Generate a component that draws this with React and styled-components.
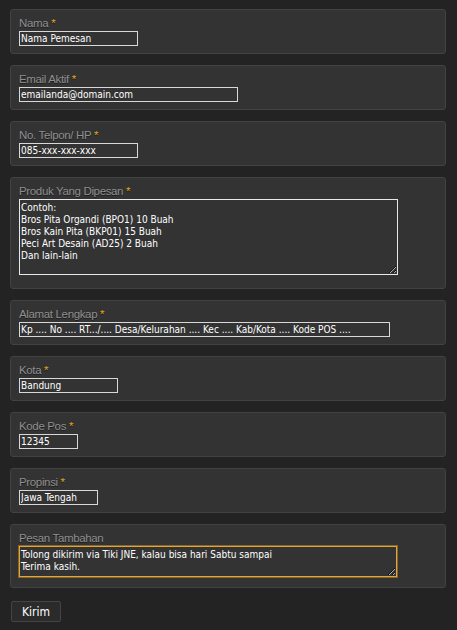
import styled, { createGlobalStyle } from "styled-components"

const GlobalStyle = createGlobalStyle`
  html, body {
    margin: 0;
    padding: 0;
    background: #232323;
  }
  body {
    font-family: "Liberation Sans", Arial, sans-serif;
  }
`

const fields = [
  { label: "Nama", required: true, value: "Nama Pemesan", width: 119 },
  { label: "Email Aktif", required: true, value: "emailanda@domain.com", width: 219 },
  { label: "No. Telpon/ HP", required: true, value: "085-xxx-xxx-xxx", width: 119 },
  {
    label: "Produk Yang Dipesan",
    required: true,
    multiline: true,
    value: "Contoh:\nBros Pita Organdi (BPO1) 10 Buah\nBros Kain Pita (BKP01) 15 Buah\nPeci Art Desain (AD25) 2 Buah\nDan lain-lain",
    width: 379,
    height: 76,
    after: 6,
  },
  {
    label: "Alamat Lengkap",
    required: true,
    value: "Kp .... No .... RT.../.... Desa/Kelurahan .... Kec .... Kab/Kota .... Kode POS ....",
    width: 371,
  },
  { label: "Kota", required: true, value: "Bandung", width: 99 },
  { label: "Kode Pos", required: true, value: "12345", width: 59 },
  { label: "Propinsi", required: true, value: "Jawa Tengah", width: 79 },
  {
    label: "Pesan Tambahan",
    multiline: true,
    active: true,
    value: "Tolong dikirim via Tiki JNE, kalau bisa hari Sabtu sampai\nTerima kasih.",
    width: 378,
    height: 31,
    after: 3,
  },
]

const App = () => {
  return (
    <>
      <GlobalStyle />
      <Form onSubmit={event => event.preventDefault()}>
        {fields.map(field => (
          <Fieldset key={field.label}>
            <Label>
              {field.label}
              {field.required ? <Star> *</Star> : false}
            </Label>
            {field.multiline ? (
              <TextArea
                $width={field.width}
                $height={field.height}
                $after={field.after}
                $active={field.active}
                defaultValue={field.value}
                spellCheck={false} />
            ) : (
              <Input
                type="text"
                $width={field.width}
                defaultValue={field.value}
                spellCheck={false} />
            )}
          </Fieldset>
        ))}
        <Button type="submit">Kirim</Button>
      </Form>
    </>
  )
}

export default App

const Form = styled.form`
  display: flex;
  flex-direction: column;
  align-items: flex-start;
  gap: 11px;
  padding: 9px 11px 10px 10px;
`

const Fieldset = styled.div`
  align-self: stretch;
  background: #333333;
  border: 1px solid #424242;
  border-radius: 3px;
  padding: 6px 8px 7px;
`

const Label = styled.label`
  display: block;
  height: 15px;
  line-height: 15px;
  font-size: 11.5px;
  letter-spacing: -0.35px;
  color: #8f8f8f;
  text-shadow: 0 1px 0 #1c1c1c;
`

const Star = styled.span`
  color: #e3a31c;
`

const fieldText = `
  display: block;
  box-sizing: border-box;
  margin: 0;
  background: #333333;
  color: #ffffff;
  font-family: "DejaVu Sans Condensed", "Liberation Sans", sans-serif;
  font-size: 10px;
  outline: none;
`

const Input = styled.input`
  ${fieldText}
  width: ${p => p.$width}px;
  height: 15px;
  padding: 0 1px;
  border: 1px solid #d8d8d8;
  line-height: 13px;
`

const TextArea = styled.textarea`
  ${fieldText}
  width: ${p => p.$width}px;
  height: ${p => p.$height}px;
  margin-bottom: ${p => p.$after || 0}px;
  padding: 2px 1px;
  line-height: 12px;
  border: 1px solid ${p => (p.$active ? "#e6a531" : "#e8e8e8")};
  box-shadow: ${p => (p.$active ? "0 0 0 1px rgba(230, 165, 49, 0.45)" : "none")};
  resize: both;
  overflow: hidden;
`

const Button = styled.button`
  width: 50px;
  height: 21px;
  margin: 2px 0 0 1px;
  padding: 0;
  background: #2b2b2b;
  border: 1px solid #444444;
  border-radius: 2px;
  color: #ffffff;
  font-family: "DejaVu Sans Condensed", "Liberation Sans", sans-serif;
  font-size: 12px;
  cursor: pointer;
`
